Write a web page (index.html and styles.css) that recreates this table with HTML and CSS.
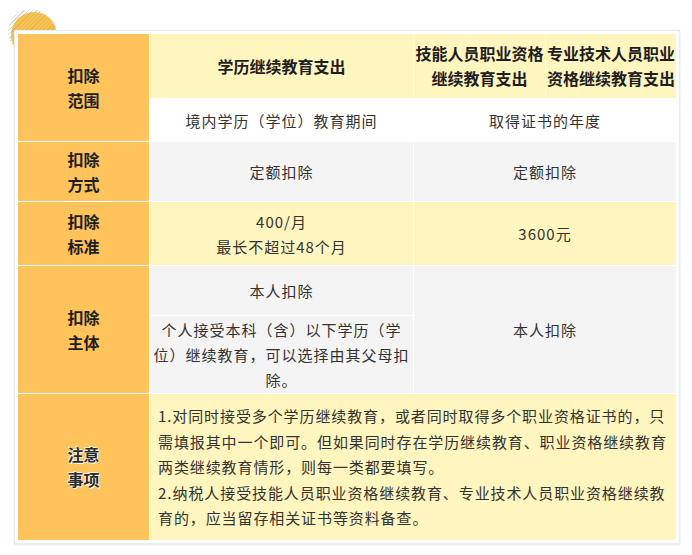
FILE: index.html
```html
<!DOCTYPE html>
<html lang="zh">
<head>
<meta charset="utf-8">
<link rel="stylesheet" href="styles.css">
</head>
<body>
<div class="page">
  <div class="deco deco-shadow"></div>
  <div class="deco"></div>
  <div class="card">
    <table class="tbl">
      <colgroup>
        <col class="c1"><col class="c2"><col class="c3"><col class="c4">
      </colgroup>
      <tr class="r-head">
        <td class="label" rowspan="2">扣除<br>范围</td>
        <td class="head">学历继续教育支出</td>
        <td class="head">技能人员职业资格继续教育支出</td>
        <td class="head">专业技术人员职业资格继续教育支出</td>
      </tr>
      <tr class="r-scope">
        <td class="white">境内学历（学位）教育期间</td>
        <td class="white" colspan="2">取得证书的年度</td>
      </tr>
      <tr class="r-way">
        <td class="label">扣除<br>方式</td>
        <td class="grey">定额扣除</td>
        <td class="grey" colspan="2">定额扣除</td>
      </tr>
      <tr class="r-std">
        <td class="label">扣除<br>标准</td>
        <td class="yellow">400/月<br>最长不超过48个月</td>
        <td class="yellow" colspan="2">3600元</td>
      </tr>
      <tr class="r-sub1">
        <td class="label" rowspan="2">扣除<br>主体</td>
        <td class="grey">本人扣除</td>
        <td class="grey" colspan="2" rowspan="2">本人扣除</td>
      </tr>
      <tr class="r-sub2">
        <td class="grey">个人接受本科（含）以下学历（学位）继续教育，可以选择由其父母扣除。</td>
      </tr>
      <tr class="r-note">
        <td class="label note-label">注意<br>事项</td>
        <td class="yellow note" colspan="3">1.对同时接受多个学历继续教育，或者同时取得多个职业资格证书的，只需填报其中一个即可。但如果同时存在学历继续教育、职业资格继续教育两类继续教育情形，则每一类都要填写。<br>2. 纳税人接受技能人员职业资格继续教育、专业技术人员职业资格继续教育的，应当留存相关证书等资料备查。</td>
      </tr>
    </table>
  </div>
</div>
</body>
</html>
```

FILE: styles.css
```css
html, body {
  margin: 0;
  padding: 0;
  background: #ffffff;
}
.page {
  position: relative;
  width: 692px;
  height: 555px;
  font-family: "Noto Sans CJK SC", "Noto Sans", sans-serif;
}
.deco {
  position: absolute;
  left: 11px;
  top: 12px;
  width: 46px;
  height: 46px;
  border-radius: 50%;
  background: repeating-linear-gradient(135deg, #f7c453 0 2px, #e6b54e 2px 3px);
}
.deco-shadow {
  left: 8px;
  top: 9px;
  background: repeating-linear-gradient(135deg, #d8d8d8 0 1px, #ffffff 1px 3px);
}
.card {
  position: relative;
  display: inline-block;
  margin: 30px 0 0 14px;
  padding: 2px;
  background: #ffffff;
  border: 1px solid #e4ecec;
  box-shadow: 0 1px 2px rgba(200, 215, 215, 0.6);
}
.tbl {
  border-collapse: separate;
  border-spacing: 1px;
  table-layout: fixed;
  width: 660px;
  background: #ffffff;
  font-size: 15px;
  letter-spacing: 1px;
  color: #333333;
}
.c1 { width: 131px; }
.c2 { width: 263px; }
.c3 { width: 131px; }
.c4 { width: 130px; }
.tbl td {
  padding: 0 2px;
  text-align: center;
  vertical-align: middle;
  line-height: 25px;
}
.label {
  background: #fec35b;
  color: #1e1e1e;
  font-weight: bold;
  font-size: 16px;
  letter-spacing: 0;
}
.note-label {
  color: #2a2a2a;
  text-shadow: 0 0 1px #ffffff, 1px 1px 0 #ffffff, -1px -1px 0 #fff4c8;
}
.tbl td.head {
  background: #fff5be;
  color: #1e1e1e;
  font-weight: bold;
  font-size: 16px;
  letter-spacing: 0;
  padding: 0;
  line-height: 25px;
}
.white { background: #ffffff; }
.grey { background: #f4f4f4; }
.yellow { background: #fff5be; }
.r-head { height: 64px; }
.r-scope { height: 42px; }
.r-way { height: 59px; }
.r-std { height: 63px; }
.r-sub1 { height: 49px; }
.r-sub2 { height: 77px; }
.r-note { height: 146px; }
.tbl td.note {
  text-align: left;
  padding: 0 0 0 8px;
  line-height: 25.5px;
  letter-spacing: 0.9px;
  word-spacing: -4px;
}
```
